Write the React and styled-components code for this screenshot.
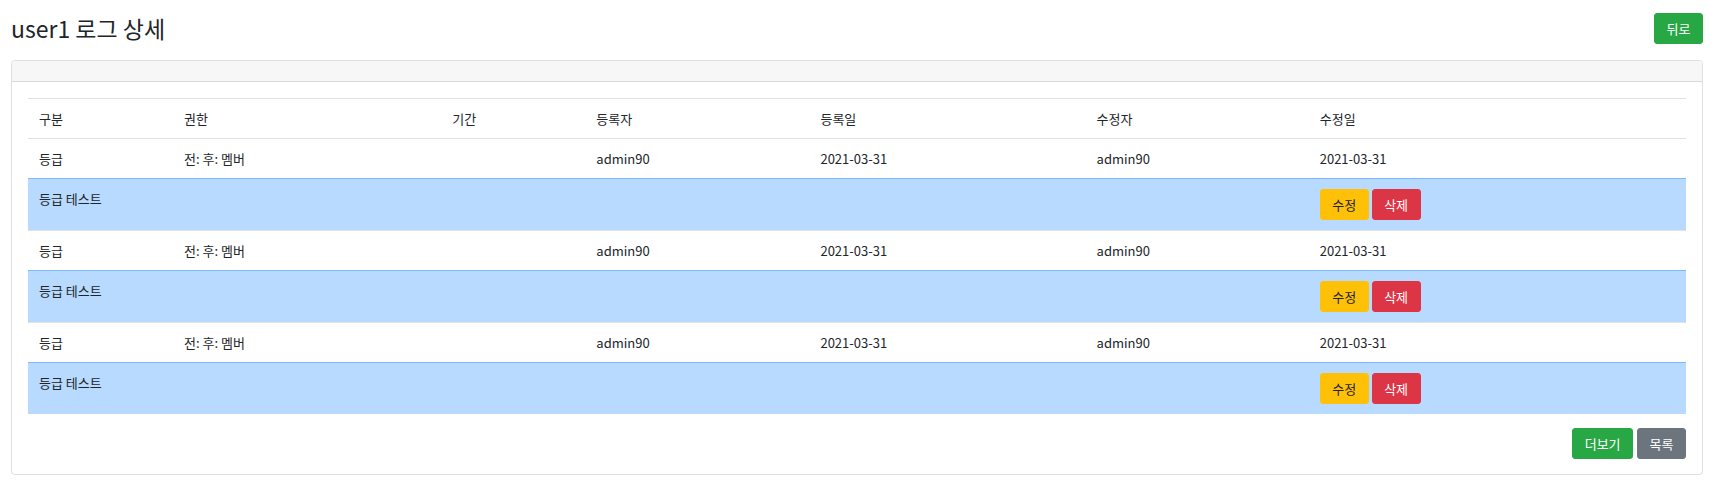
import React from "react";
import styled, { createGlobalStyle } from "styled-components";

const GlobalStyle = createGlobalStyle`
  html, body { margin: 0; padding: 0; background: #fff; }
  body {
    font-family: "Noto Sans CJK KR", "Noto Sans", sans-serif;
    color: #212529;
    font-size: 13px;
  }
  * { box-sizing: border-box; }
`;

const Page = styled.div`
  padding: 13px 14px 12px 11px;
`;

const TopBar = styled.div`
  display: flex;
  align-items: center;
  justify-content: space-between;
  margin-bottom: 16px;
`;

const Title = styled.h3`
  margin: 0;
  font-size: 23px;
  font-weight: 400;
  line-height: 31px;
  color: #212529;
`;

const variants = {
  success: { bg: "#28a745", fg: "#fff" },
  secondary: { bg: "#6c757d", fg: "#fff" },
  warning: { bg: "#ffc107", fg: "#212529" },
  danger: { bg: "#dc3545", fg: "#fff" },
};

const Button = styled.button`
  font-family: inherit;
  font-size: 13px;
  height: 31px;
  line-height: 29px;
  padding: 0 11.5px;
  border: 1px solid ${(p) => variants[p.$variant].bg};
  background: ${(p) => variants[p.$variant].bg};
  color: ${(p) => variants[p.$variant].fg};
  border-radius: 3px;
  cursor: pointer;
  white-space: nowrap;
`;

const Card = styled.div`
  border: 1px solid rgba(0, 0, 0, 0.125);
  border-radius: 4px;
  overflow: hidden;
`;

const CardHeader = styled.div`
  height: 21px;
  background: #f7f7f7;
  border-bottom: 1px solid rgba(0, 0, 0, 0.125);
`;

const CardBody = styled.div`
  padding: 16px 16px 15px;
`;

const Table = styled.table`
  width: 100%;
  border-collapse: collapse;
  table-layout: fixed;
  margin-bottom: 14px;
`;

const Cell = styled.td`
  padding: 10px 11px;
  line-height: 19px;
  font-weight: 400;
  text-align: left;
  vertical-align: top;
  border-top: 1px solid ${(p) => (p.$memo ? "#7abaff" : "#dee2e6")};
  background: ${(p) => (p.$memo ? "#b8daff" : "transparent")};
`;

const HeadCell = styled(Cell).attrs({ as: "th" })`
  border-bottom: 1px solid #dee2e6;
`;

const ActionGroup = styled.div`
  display: flex;
  gap: 3px;
`;

const Footer = styled.div`
  display: flex;
  justify-content: flex-end;
  gap: 4px;
`;

const widths = [145, 268, 144, 224, 276, 223, 377];
const headers = ["구분", "권한", "기간", "등록자", "등록일", "수정자", "수정일"];

const rows = [
  { type: "등급", auth: "전: 후: 멤버", period: "", reg: "admin90", regDate: "2021-03-31", mod: "admin90", modDate: "2021-03-31", memo: "등급 테스트" },
  { type: "등급", auth: "전: 후: 멤버", period: "", reg: "admin90", regDate: "2021-03-31", mod: "admin90", modDate: "2021-03-31", memo: "등급 테스트" },
  { type: "등급", auth: "전: 후: 멤버", period: "", reg: "admin90", regDate: "2021-03-31", mod: "admin90", modDate: "2021-03-31", memo: "등급 테스트" },
];

export default function App() {
  return (
    <>
      <GlobalStyle />
      <Page>
        <TopBar>
          <Title>user1 로그 상세</Title>
          <Button $variant="success">뒤로</Button>
        </TopBar>
        <Card>
          <CardHeader />
          <CardBody>
            <Table>
              <colgroup>
                {widths.map((w, i) => (
                  <col key={i} style={{ width: w }} />
                ))}
              </colgroup>
              <thead>
                <tr>
                  {headers.map((h) => (
                    <HeadCell key={h}>{h}</HeadCell>
                  ))}
                </tr>
              </thead>
              <tbody>
                {rows.map((r, i) => (
                  <React.Fragment key={i}>
                    <tr>
                      <Cell>{r.type}</Cell>
                      <Cell>{r.auth}</Cell>
                      <Cell>{r.period}</Cell>
                      <Cell>{r.reg}</Cell>
                      <Cell>{r.regDate}</Cell>
                      <Cell>{r.mod}</Cell>
                      <Cell>{r.modDate}</Cell>
                    </tr>
                    <tr>
                      <Cell $memo colSpan={6}>{r.memo}</Cell>
                      <Cell $memo>
                        <ActionGroup>
                          <Button $variant="warning">수정</Button>
                          <Button $variant="danger">삭제</Button>
                        </ActionGroup>
                      </Cell>
                    </tr>
                  </React.Fragment>
                ))}
              </tbody>
            </Table>
            <Footer>
              <Button $variant="success">더보기</Button>
              <Button $variant="secondary">목록</Button>
            </Footer>
          </CardBody>
        </Card>
      </Page>
    </>
  );
}
